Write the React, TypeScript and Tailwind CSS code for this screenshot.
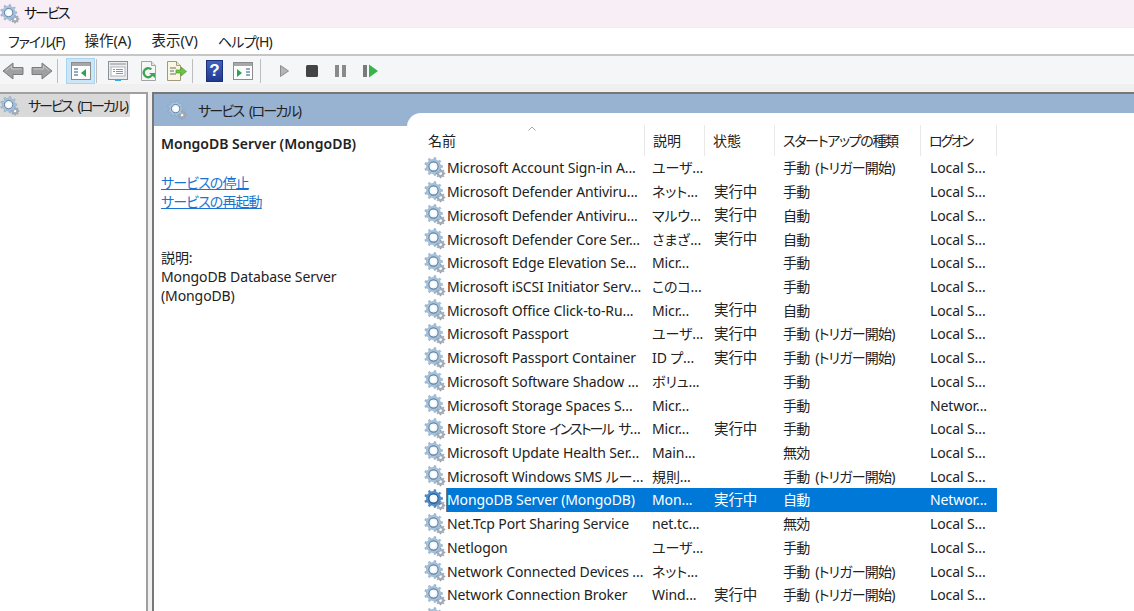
const JP = "font-['Noto_Sans','Noto_Sans_CJK_JP',sans-serif] [font-feature-settings:'palt']";

const rows = [
  ["Microsoft Account Sign-in A...", "ユーザ...", "", "手動 (トリガー開始)", "Local S..."],
  ["Microsoft Defender Antiviru...", "ネット...", "実行中", "手動", "Local S..."],
  ["Microsoft Defender Antiviru...", "マルウ...", "実行中", "自動", "Local S..."],
  ["Microsoft Defender Core Ser...", "さまざ...", "実行中", "自動", "Local S..."],
  ["Microsoft Edge Elevation Se...", "Micr...", "", "手動", "Local S..."],
  ["Microsoft iSCSI Initiator Serv...", "このコ...", "", "手動", "Local S..."],
  ["Microsoft Office Click-to-Ru...", "Micr...", "実行中", "自動", "Local S..."],
  ["Microsoft Passport", "ユーザ...", "実行中", "手動 (トリガー開始)", "Local S..."],
  ["Microsoft Passport Container", "ID プ...", "実行中", "手動 (トリガー開始)", "Local S..."],
  ["Microsoft Software Shadow ...", "ボリュ...", "", "手動", "Local S..."],
  ["Microsoft Storage Spaces S...", "Micr...", "", "手動", "Networ..."],
  ["Microsoft Store インストール サ...", "Micr...", "実行中", "手動", "Local S..."],
  ["Microsoft Update Health Ser...", "Main...", "", "無効", "Local S..."],
  ["Microsoft Windows SMS ルー...", "規則...", "", "手動 (トリガー開始)", "Local S..."],
  ["MongoDB Server (MongoDB)", "Mon...", "実行中", "自動", "Networ..."],
  ["Net.Tcp Port Sharing Service", "net.tc...", "", "無効", "Local S..."],
  ["Netlogon", "ユーザ...", "", "手動", "Local S..."],
  ["Network Connected Devices ...", "ネット...", "", "手動 (トリガー開始)", "Local S..."],
  ["Network Connection Broker", "Wind...", "実行中", "手動 (トリガー開始)", "Local S..."],
];

function gearPath(cx: number, cy: number, r: number, teeth: number) {
  let d = "";
  const step = (Math.PI * 2) / teeth;
  for (let i = 0; i < teeth; i++) {
    const a = i * step;
    const pts = [
      [a - step * 0.5, r * 0.78],
      [a - step * 0.22, r * 0.78],
      [a - step * 0.14, r],
      [a + step * 0.14, r],
      [a + step * 0.22, r * 0.78],
    ];
    pts.forEach(([t, q], j) => {
      d += `${i === 0 && j === 0 ? "M" : "L"}${(cx + Math.cos(t) * q).toFixed(2)} ${(cy + Math.sin(t) * q).toFixed(2)}`;
    });
  }
  return d + "Z";
}

function GearIcon({ size = 22, active = false }: { size?: number; active?: boolean }) {
  const main = active ? "#4f8fd0" : "#a6c3de";
  const edge = active ? "#2a69ab" : "#7d9cba";
  return (
    <svg width={size} height={size} viewBox="0 0 22 22" className="shrink-0">
      <path d={gearPath(16.5, 16.5, 4.6, 8)} fill="#a3adb7" stroke="#87919b" strokeWidth="0.4" />
      <circle cx="16.5" cy="16.5" r="1.4" fill="#fff" />
      <path d={gearPath(9.5, 9.5, 9, 9)} fill={main} stroke={edge} strokeWidth="0.5" />
      <circle cx="9.5" cy="9.5" r="4.6" fill="#f1f6fb" stroke={active ? "#1f4f86" : "#5f7f9f"} strokeWidth="1.1" />
      <circle cx="9.5" cy="9.5" r="2.4" fill="#fff" />
    </svg>
  );
}

function Arrow({ dir }: { dir: "left" | "right" }) {
  return (
    <svg width="22" height="18" viewBox="0 0 22 18" className={dir === "right" ? "" : "-scale-x-100"}>
      <path d="M1 5.5h10V1L21 9l-10 8v-4.5H1z" fill="#a0a0a0" stroke="#7c7c7c" strokeWidth="1" />
      <path d="M2.5 7h10V4L18 8.5" fill="none" stroke="#c9c9c9" strokeWidth="1" />
    </svg>
  );
}

function PaneIcon({ flip = false }: { flip?: boolean }) {
  return (
    <svg width="20" height="18" viewBox="0 0 20 18">
      <rect x="0.5" y="0.5" width="19" height="17" fill="#fdfdfd" stroke="#8c8c8c" />
      <rect x="1" y="1" width="18" height="3" fill="#a7a7a7" />
      {flip ? (
        <>
          <path d="M4 7l5 4-5 4z" fill="#2da44e" />
          <path d="M13 7h4M13 10h4M13 13h4" stroke="#6d8fb0" strokeWidth="1.4" />
        </>
      ) : (
        <>
          <path d="M15 7l-5 4 5 4z" fill="#2da44e" />
          <path d="M3 7h4M3 10h4M3 13h4" stroke="#6d8fb0" strokeWidth="1.4" />
        </>
      )}
    </svg>
  );
}

function PropsIcon() {
  return (
    <svg width="20" height="20" viewBox="0 0 20 20">
      <rect x="0.5" y="0.5" width="19" height="18" fill="#ececec" stroke="#8f8f8f" />
      <rect x="2" y="2" width="16" height="2" fill="#bdbdbd" />
      <rect x="3" y="6" width="14" height="9" fill="#fff" stroke="#a3b4c6" />
      <path d="M8 8.5h7M8 10.5h7M8 12.5h7M5 8.5h2M5 10.5h2" stroke="#7b97b5" />
      <path d="M7 19h6" stroke="#35a7e8" strokeWidth="2" />
    </svg>
  );
}

function RefreshIcon() {
  return (
    <svg width="20" height="20" viewBox="0 0 20 20">
      <path d="M2.5 0.5h10l4 4v15h-14z" fill="#f6f6f6" stroke="#a3a3a3" />
      <path d="M12.5 0.5v4h4" fill="#e5e5e5" stroke="#a3a3a3" />
      <path d="M13.5 13a4.5 4.5 0 1 1-1.2-4.6" fill="none" stroke="#3aa655" strokeWidth="2.4" />
      <path d="M10 12l6 0 0 5z" fill="#3aa655" />
    </svg>
  );
}

function ExportIcon() {
  return (
    <svg width="21" height="20" viewBox="0 0 21 20">
      <path d="M1.5 0.5h9l4 4v15h-13z" fill="#fbf7df" stroke="#a19a7c" />
      <path d="M10.5 0.5v4h4" fill="#eee8c5" stroke="#a19a7c" />
      <path d="M4 7h6M4 10h4M4 13h6" stroke="#5f6f80" strokeWidth="1.2" />
      <path d="M10 9h5V6l5.5 4.5L15 15v-3h-5z" fill="#6cc644" stroke="#4c9a2a" strokeWidth="0.7" />
    </svg>
  );
}

function HelpIcon() {
  return (
    <div className="w-[17px] h-[22px] bg-gradient-to-b from-[#3f62c4] to-[#22398f] border border-[#1b2f7a] flex items-center justify-center text-white text-[17px] font-bold font-['Liberation_Sans',sans-serif]">
      ?
    </div>
  );
}

function Toolbar() {
  return (
    <div className="h-[28px] pt-[2px] bg-[#f5f6f7] flex items-center pl-[2px]">
      <Arrow dir="left" />
      <div className="w-[7px]" />
      <Arrow dir="right" />
      <div className="w-px h-[24px] bg-[#bdbdbd] ml-[4px] mr-[8px]" />
      <div className="w-[29px] h-[26px] bg-[#cde6f7] border border-[#a9d4f2] flex items-center justify-center">
        <PaneIcon />
      </div>
      <div className="w-px h-[24px] bg-[#bdbdbd] ml-[1px] mr-[11px]" />
      <PropsIcon />
      <div className="w-[11px]" />
      <RefreshIcon />
      <div className="w-[7px]" />
      <ExportIcon />
      <div className="w-px h-[24px] bg-[#bdbdbd] ml-[5px] mr-[13px]" />
      <HelpIcon />
      <div className="w-[10px]" />
      <PaneIcon flip />
      <div className="w-px h-[24px] bg-[#bdbdbd] ml-[7px] mr-[12px]" />
      <svg width="130" height="16" viewBox="0 0 130 16">
        <path d="M7.5 2.5l8 5.5-8 5.5z" fill="#b5b5b5" stroke="#8d8d8d" />
        <rect x="33" y="2" width="12" height="12" rx="1.5" fill="#444" />
        <rect x="62" y="2" width="4" height="12" fill="#8a8a8a" />
        <rect x="69" y="2" width="4" height="12" fill="#8a8a8a" />
        <rect x="90" y="2" width="4" height="12" fill="#7a7a7a" />
        <path d="M96 1.5l9 6.5-9 6.5z" fill="#37b34a" />
      </svg>
    </div>
  );
}

function Header({ w, label, track = "" }: { w: string; label: string; track?: string }) {
  return (
    <div className={`${w} h-[31px] border-r border-[#e8e8e8] pl-[8px] flex items-center whitespace-nowrap ${track}`}>
      {label}
    </div>
  );
}

// the one name cell that mixes long katakana into latin text
function Name({ text }: { text: string }) {
  if (!text.includes("インストール")) return <>{text}</>;
  const [head, tail] = text.split("インストール サ");
  return (
    <>
      {head}
      <span className="tracking-[-1.9px] [word-spacing:4px]">インストール サ</span>
      {tail}
    </>
  );
}

export default function App() {
  return (
    <div className={`w-[1134px] h-[611px] overflow-hidden bg-white text-[14px] text-[#222] flex flex-col ${JP}`}>
      {/* title bar */}
      <div className="h-[27px] bg-[#f8eef6] flex items-center text-[#111]">
        <GearIcon size={20} />
        <span className="ml-[4px] -mt-[2px] tracking-[-2px]">サービス</span>
      </div>
      {/* menu */}
      <div className="h-[27px] flex items-center gap-[20px] pl-[8px] bg-white border-t border-[#eeeeee]">
        <span className="tracking-[-1.1px]">ファイル(F)</span>
        <span className="text-[14.5px]">操作(A)</span>
        <span className="text-[14.5px]">表示(V)</span>
        <span className="tracking-[-0.8px]">ヘルプ(H)</span>
      </div>
      <div className="h-[2px] bg-[#c6c6c6]" />
      <Toolbar />
      <div className="h-[8px] bg-[#f0f0f0]" />

      <div className="flex-1 flex min-h-0 bg-[#f0f0f0]">
        {/* tree */}
        <div className="w-[148px] bg-white border-t-2 border-r-2 border-[#a0a0a0]">
          <div className="h-[23px] w-[130px] bg-[#d9d9d9] flex items-center">
            <GearIcon size={20} />
            <span className="ml-[8px] whitespace-nowrap tracking-[-2.1px] [word-spacing:4px]">サービス (ローカル)</span>
          </div>
        </div>
        <div className="w-[4px]" />
        {/* main */}
        <div className="flex-1 flex border-t-2 border-l-2 border-[#777] bg-white min-w-0">
          <div className="w-[253px] shrink-0 flex flex-col">
            <div className="h-[32px] bg-[#98b2d1] flex items-center pl-[13px]">
              <GearIcon size={20} />
              <span className="ml-[11px] whitespace-nowrap tracking-[-1.8px] [word-spacing:4px]">サービス (ローカル)</span>
            </div>
            <div className="pl-[7px] pt-[7px] tracking-[-0.1px]">
              <div className="font-semibold tracking-normal">MongoDB Server (MongoDB)</div>
              <div className="mt-[19px] text-[#1a75d2] underline leading-[19px] tracking-[-0.9px]">
                <div>サービスの停止</div>
                <div>サービスの再起動</div>
              </div>
              <div className="mt-[37px] leading-[19px]">
                <div>説明:</div>
                <div>MongoDB Database Server</div>
                <div>(MongoDB)</div>
              </div>
            </div>
          </div>
          <div className="flex-1 flex flex-col min-w-0 bg-[#98b2d1] pt-[19px]">
            <div className="flex-1 bg-white rounded-tl-[14px] pl-[13px] pt-[12px] overflow-hidden relative">
              <svg width="8" height="5" viewBox="0 0 8 5" className="absolute left-[121px] top-[13px]">
                <path d="M0.5 4.5L4 1l3.5 3.5" fill="none" stroke="#a9a9a9" />
              </svg>
              <div className="flex">
                <Header w="w-[225px]" label="名前" />
                <Header w="w-[60px]" label="説明" />
                <Header w="w-[70px]" label="状態" />
                <Header w="w-[146px]" label="スタートアップの種類" track="tracking-[-1.3px]" />
                <Header w="w-[76px]" label="ログオン" track="tracking-[-2.2px]" />
              </div>
              {rows.map((r, i) => {
                const sel = r[0].startsWith("MongoDB");
                return (
                  <div key={i} className="flex h-[23.72px] items-center whitespace-nowrap tracking-[-0.1px]">
                    <div className="w-[4px]" />
                    <GearIcon size={22} active={sel} />
                    <div className={`flex flex-1 h-full items-center max-w-[551px] ${sel ? "bg-[#0078d7] text-white shadow-[inset_1px_0_0_#6b7c8c]" : ""}`}>
                      <div className="w-[199px] pl-px"><Name text={r[0]} /></div>
                      <div className="w-[61px] pl-[7px]">{r[1]}</div>
                      <div className="w-[69px] pl-[8px] text-[14.5px]">{r[2]}</div>
                      <div className="w-[147px] pl-[8px] tracking-[-0.8px] [word-spacing:3px]">{r[3]}</div>
                      <div className="w-[75px] pl-[8px]">{r[4]}</div>
                    </div>
                  </div>
                );
              })}
              <div className="flex h-[23.72px] pl-[4px]"><GearIcon size={22} /></div>
            </div>
          </div>
        </div>
      </div>
    </div>
  );
}
